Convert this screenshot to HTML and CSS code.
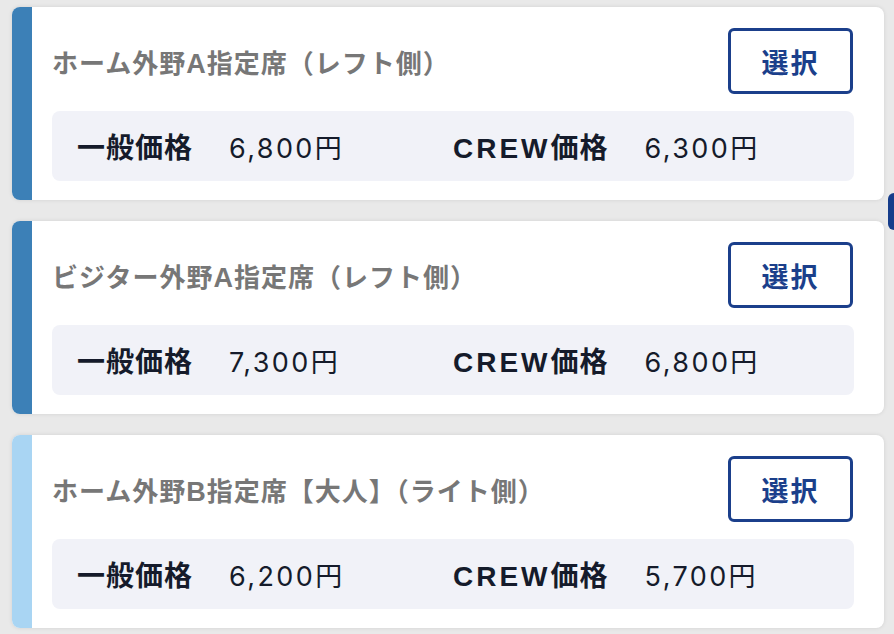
FILE: index.html
```html
<!DOCTYPE html>
<html lang="ja">
<head>
<meta charset="utf-8">
<link rel="stylesheet" href="styles.css">
</head>
<body>
<div class="list">
  <div class="card">
    <div class="bar bar-dark"></div>
    <div class="content">
      <div class="head">
        <div class="title">ホーム外野<span class="latin">A</span>指定席（レフト側）</div>
        <button class="select">選択</button>
      </div>
      <div class="prices">
        <div class="price"><span class="label">一般価格</span><span class="value">6,800円</span></div>
        <div class="price"><span class="label"><span class="crew">CREW</span>価格</span><span class="value">6,300円</span></div>
      </div>
    </div>
  </div>
  <div class="card">
    <div class="bar bar-dark"></div>
    <div class="content">
      <div class="head">
        <div class="title">ビジター外野<span class="latin">A</span>指定席（レフト側）</div>
        <button class="select">選択</button>
      </div>
      <div class="prices">
        <div class="price"><span class="label">一般価格</span><span class="value">7,300円</span></div>
        <div class="price"><span class="label"><span class="crew">CREW</span>価格</span><span class="value">6,800円</span></div>
      </div>
    </div>
  </div>
  <div class="card">
    <div class="bar bar-light"></div>
    <div class="content">
      <div class="head">
        <div class="title">ホーム外野<span class="latin">B</span>指定席【大人】（ライト側）</div>
        <button class="select">選択</button>
      </div>
      <div class="prices">
        <div class="price"><span class="label">一般価格</span><span class="value">6,200円</span></div>
        <div class="price"><span class="label"><span class="crew">CREW</span>価格</span><span class="value">5,700円</span></div>
      </div>
    </div>
  </div>
</div>
<div class="side-tab"></div>
</body>
</html>
```
FILE: styles.css
```css
html, body {
  margin: 0;
  padding: 0;
}
body {
  background: #e9e9e9;
  font-family: "Noto Sans CJK JP", "Noto Sans", sans-serif;
  width: 894px;
  height: 634px;
  overflow: hidden;
  position: relative;
}
.list {
  display: flex;
  flex-direction: column;
  gap: 21px;
  padding: 7px 10px 0 12px;
}
.card {
  display: flex;
  background: #fff;
  border-radius: 8px;
  overflow: hidden;
  box-shadow: 0 0 4px rgba(0,0,0,0.10);
  height: 193px;
}
.bar {
  width: 20px;
  flex: none;
}
.bar-dark { background: #3c80b7; }
.bar-light { background: #a9d5f3; }
.content {
  flex: 1;
  padding: 21px 30px 0 20px;
}
.head {
  display: flex;
  justify-content: space-between;
  align-items: center;
  height: 66px;
  padding-right: 1px;
}
.title {
  color: #777777;
  font-size: 26px;
  font-weight: 700;
  letter-spacing: 1px;
}
.title .latin {
  font-family: "Liberation Sans", sans-serif;
  font-size: 27px;
}
.select {
  width: 125px;
  height: 66px;
  box-sizing: border-box;
  border: 3px solid #1b3f8b;
  border-radius: 6px;
  background: #fff;
  color: #1b3f8b;
  font-family: "Noto Sans CJK JP", sans-serif;
  font-size: 27px;
  font-weight: 700;
  padding: 0;
  letter-spacing: 2px;
}
.prices {
  margin-top: 17px;
  height: 70px;
  background: #f1f2f8;
  border-radius: 8px;
  padding: 0 25px;
  display: grid;
  grid-template-columns: 1fr 1fr;
  align-items: center;
}
.price {
  display: flex;
  align-items: center;
  gap: 36px;
  color: #151b2b;
}
.label {
  font-size: 28px;
  font-weight: 700;
  letter-spacing: 1px;
}
.crew {
  font-family: "Liberation Sans", sans-serif;
  letter-spacing: 3px;
}
.value {
  font-family: "Inter", "Noto Sans CJK JP", sans-serif;
  font-size: 27px;
  font-weight: 400;
  letter-spacing: 2.4px;
}
.side-tab {
  position: absolute;
  left: 888px;
  top: 193px;
  width: 14px;
  height: 37px;
  border-radius: 6px;
  background: #163d8b;
}
```
